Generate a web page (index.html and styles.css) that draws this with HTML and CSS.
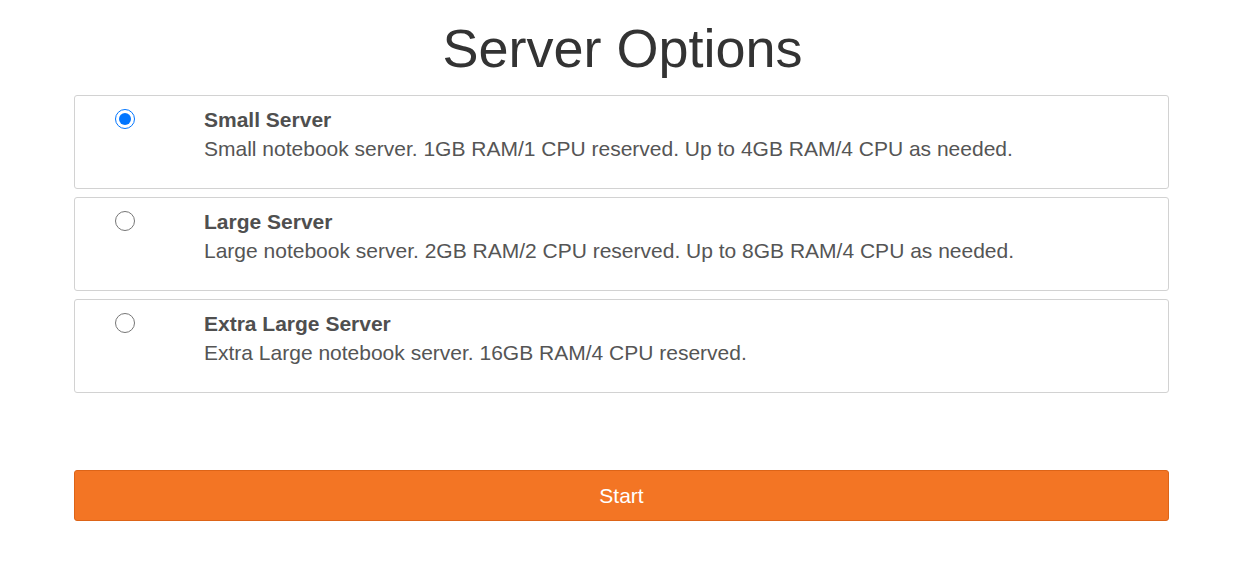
FILE: index.html
```html
<!DOCTYPE html>
<html lang="en">
<head>
    <meta charset="UTF-8">
    <meta name="viewport" content="width=device-width, initial-scale=1.0">
    <title>Server Options</title>
    <link rel="stylesheet" href="styles.css">
</head>
<body>
    <div class="container">
        <h1>Server Options</h1>

        <form id="spawn-form">
            <label class="option">
                <span class="option-radio">
                    <input type="radio" name="profile" value="small" checked>
                </span>
                <span class="option-text">
                    <strong>Small Server</strong>
                    <span class="option-desc">Small notebook server. 1GB RAM/1 CPU reserved. Up to 4GB RAM/4 CPU as needed.</span>
                </span>
            </label>

            <label class="option">
                <span class="option-radio">
                    <input type="radio" name="profile" value="large">
                </span>
                <span class="option-text">
                    <strong>Large Server</strong>
                    <span class="option-desc">Large notebook server. 2GB RAM/2 CPU reserved. Up to 8GB RAM/4 CPU as needed.</span>
                </span>
            </label>

            <label class="option">
                <span class="option-radio">
                    <input type="radio" name="profile" value="xlarge">
                </span>
                <span class="option-text">
                    <strong>Extra Large Server</strong>
                    <span class="option-desc">Extra Large notebook server. 16GB RAM/4 CPU reserved.</span>
                </span>
            </label>

            <button type="submit" class="btn-start">Start</button>
        </form>
    </div>
</body>
</html>
```

FILE: styles.css
```css
body {
    margin: 0;
    font-family: "Liberation Sans", Arial, sans-serif;
    font-size: 21px;
    line-height: 30px;
    color: #555;
    background: #fff;
}
.container {
    width: 1095px;
    margin-left: 74px;
}
h1 {
    margin: 19px 0 17px;
    padding-left: 2px;
    font-size: 54px;
    font-weight: normal;
    line-height: 59px;
    text-align: center;
    color: #333;
}

/* Profile cards */
.option {
    display: flex;
    height: 94px;
    box-sizing: border-box;
    padding-top: 9px;
    margin-bottom: 8px;
    border: 1px solid #d2d2d2;
    border-radius: 3px;
    cursor: pointer;
}
.option + .option + .option {
    margin-top: 1px;
}
.option-radio {
    width: 129px;
    padding-left: 40px;
    box-sizing: border-box;
}
.option-radio input {
    width: 20px;
    height: 20px;
    margin: 4px 0 0;
}
.option-text {
    display: flex;
    flex-direction: column;
}
.option-text strong {
    font-weight: bold;
    color: #4f4f4f;
}
.option-desc {
    margin-top: -1px;
}

.btn-start {
    display: block;
    width: 100%;
    height: 51px;
    margin-top: 77px;
    padding: 0;
    font-family: inherit;
    font-size: 21px;
    color: #fff;
    background-color: #f37524;
    border: 1px solid #dd6417;
    border-radius: 3px;
    cursor: pointer;
}
```
